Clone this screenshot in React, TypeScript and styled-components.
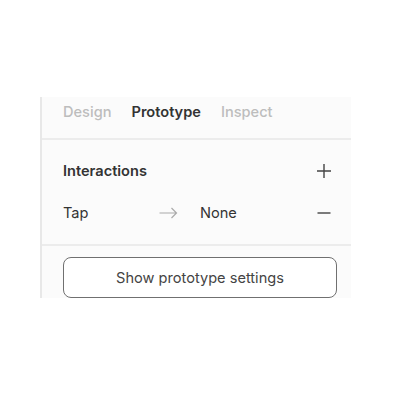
import styled, { createGlobalStyle } from "styled-components";

const GlobalStyle = createGlobalStyle`
    body {
        margin: 0;
        background: #ffffff;
        font-family: Inter, "Liberation Sans", sans-serif;
    }
`;

const Panel = styled.div`
    margin: 97px 0 0 40px;
    width: 311px;
    background-color: #fbfbfb;
    border-left: 2px solid #e8e8e8;
    box-sizing: border-box;
`;

const Tabs = styled.div`
    display: flex;
    gap: 20px;
    height: 43px;
    padding: 7px 0 0 21px;
    box-sizing: border-box;
    border-bottom: 2px solid #ececec;
`;

const Tab = styled.span<{ active?: boolean }>`
    font-size: 14.6px;
    line-height: 17px;
    font-weight: ${(props) => (props.active ? 600 : 500)};
    color: ${(props) => (props.active ? "#333333" : "#bdbdbd")};
`;

const Section = styled.div`
    display: flex;
    flex-direction: column;
    gap: 8px;
    padding: 14px 19px 14px 21px;
    border-bottom: 2px solid #ececec;
`;

const Row = styled.div`
    display: grid;
    grid-template-columns: 96px 41px 1fr auto;
    align-items: center;
    height: 34px;
    font-size: 14.6px;
    color: #333333;
`;

const Title = styled.span`
    grid-column: 1 / 4;
    font-weight: 600;
`;

const Arrow = styled.span`
    display: flex;
    align-items: center;
`;

const IconButton = styled.span`
    display: flex;
    align-items: center;
    justify-content: center;
    width: 16px;
    height: 16px;
`;

const Footer = styled.div`
    padding: 11px 14px 0 21px;
`;

const SettingsButton = styled.button`
    display: block;
    width: 100%;
    height: 41px;
    box-sizing: border-box;
    border: 1.5px solid #707070;
    border-radius: 8px;
    background: #ffffff;
    font-family: Inter, "Liberation Sans", sans-serif;
    font-size: 14.6px;
    color: #444444;
`;

function Plus() {
    return (
        <svg width="16" height="16" viewBox="0 0 16 16">
            <path d="M8 1v14M1 8h14" stroke="#444" strokeWidth="1.4" />
        </svg>
    );
}

function Minus() {
    return (
        <svg width="16" height="16" viewBox="0 0 16 16">
            <path d="M1.5 8h13" stroke="#444" strokeWidth="1.4" />
        </svg>
    );
}

function ArrowRight() {
    return (
        <svg width="19" height="12" viewBox="0 0 19 12">
            <path
                d="M0.5 6h17M12.5 1l5 5-5 5"
                stroke="#aaaaaa"
                strokeWidth="1.2"
                fill="none"
            />
        </svg>
    );
}

function App() {
    return (
        <>
            <GlobalStyle />
            <Panel>
                <Tabs>
                    <Tab>Design</Tab>
                    <Tab active>Prototype</Tab>
                    <Tab>Inspect</Tab>
                </Tabs>
                <Section>
                    <Row>
                        <Title>Interactions</Title>
                        <IconButton>
                            <Plus />
                        </IconButton>
                    </Row>
                    <Row>
                        <span>Tap</span>
                        <Arrow>
                            <ArrowRight />
                        </Arrow>
                        <span>None</span>
                        <IconButton>
                            <Minus />
                        </IconButton>
                    </Row>
                </Section>
                <Footer>
                    <SettingsButton>Show prototype settings</SettingsButton>
                </Footer>
            </Panel>
        </>
    );
}

export default App;
